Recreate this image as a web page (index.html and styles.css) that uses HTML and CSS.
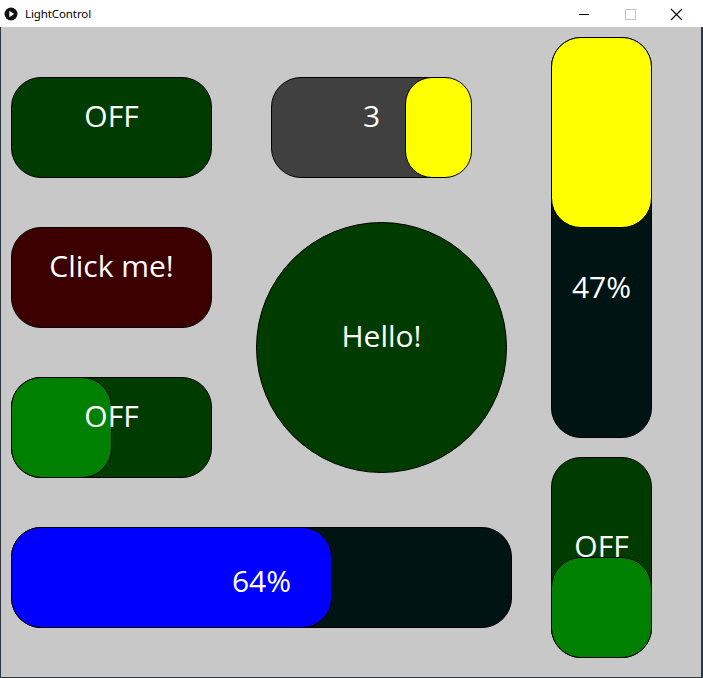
FILE: index.html
```html
<!DOCTYPE html>
<html>
<head>
<meta charset="utf-8">
<title>LightControl</title>
<link rel="stylesheet" href="styles.css">
</head>
<body>
<div class="window">
  <div class="titlebar">
    <svg class="app-icon" width="16" height="16" viewBox="0 0 16 16">
      <circle cx="8" cy="8" r="6.5" fill="#111"/>
      <polygon points="6.3,4.8 6.3,11.2 11.2,8" fill="#fff"/>
    </svg>
    <span class="title">LightControl</span>
    <div class="controls">
      <svg class="ctl" width="46" height="27" viewBox="0 0 46 27"><line x1="18" y1="14.5" x2="28" y2="14.5" stroke="#000" stroke-width="1"/></svg>
      <svg class="ctl" width="46" height="27" viewBox="0 0 46 27"><rect x="18.5" y="9.5" width="10" height="10" fill="none" stroke="#c4c4c4" stroke-width="1"/></svg>
      <svg class="ctl" width="46" height="27" viewBox="0 0 46 27"><path d="M18 9 L29 20 M29 9 L18 20" stroke="#000" stroke-width="1.1"/></svg>
    </div>
  </div>
  <div class="frame">
    <div class="canvas">
      <div class="left">
        <div class="row1">
          <div class="w dark-green"><span class="lbl">OFF</span></div>
          <div class="w gray"><span class="lbl">3</span><div class="handle"></div></div>
        </div>
        <div class="row2">
          <div class="stack">
            <div class="w dark-red"><span class="lbl">Click me!</span></div>
            <div class="w dark-green"><div class="knob knob-left"></div><span class="lbl">OFF</span></div>
          </div>
          <div class="circle"><span class="lbl">Hello!</span></div>
        </div>
        <div class="w hslider"><div class="fill-blue" style="width:321px"></div><span class="lbl lbl-low">64%</span></div>
      </div>
      <div class="right">
        <div class="w vslider"><div class="fill-yellow" style="height:191px"></div><span class="lbl lbl-vs">47%</span></div>
        <div class="w vtoggle dark-green"><span class="lbl">OFF</span><div class="knob knob-bottom"></div></div>
      </div>
    </div>
  </div>
</div>
</body>
</html>
```
FILE: styles.css
```css
* { box-sizing: border-box; }
html, body { margin: 0; padding: 0; }
body {
  width: 703px;
  height: 678px;
  overflow: hidden;
  background: #fff;
  font-family: "Open Sans", "DejaVu Sans", sans-serif;
}
.window { width: 703px; height: 678px; display: flex; flex-direction: column; }

.titlebar {
  height: 27px;
  display: flex;
  align-items: center;
  background: #fff;
  padding-left: 3px;
}
.app-icon { display: block; margin-top: 1px; }
.title {
  margin-left: 6px;
  font-family: "Noto Sans", "Open Sans", sans-serif;
  font-size: 11.5px;
  color: #000;
  letter-spacing: -0.1px;
}
.controls { margin-left: auto; display: flex; margin-right: 4px; }
.ctl { display: block; }

.frame {
  width: 703px;
  height: 651px;
  border-left: 1px solid #2c3740;
  border-right: 2px solid #2c3740;
  border-bottom: 1px solid #2c3740;
}
.canvas {
  width: 700px;
  height: 650px;
  background: #c8c8c8;
  display: flex;
  gap: 40px;
  padding: 10px 0 0 10px;
}

.left { display: flex; flex-direction: column; padding-top: 40px; width: 500px; }
.row1 { display: flex; gap: 59px; }
.row2 { display: flex; gap: 44px; margin-top: 44px; }
.stack { display: flex; flex-direction: column; gap: 49px; padding-top: 5px; }
.right { display: flex; flex-direction: column; gap: 20px; }

.w {
  position: relative;
  width: 201px;
  height: 101px;
  border: 1px solid #000;
  border-radius: 30px;
  display: flex;
  align-items: center;
  justify-content: center;
  color: #fff;
  font-size: 30px;
  line-height: 30px;
}
.lbl { position: relative; padding-bottom: 23px; white-space: nowrap; }
.lbl-low { padding-bottom: 0; padding-top: 7px; }
.lbl-vs { padding-bottom: 0; padding-top: 99px; }

.dark-green { background: #003c00; }
.dark-red { background: #3c0000; }
.gray { background: #404040; }

.handle {
  position: absolute;
  top: -1px;
  right: -1px;
  width: 67px;
  height: 101px;
  background: #ffff00;
  border: 1px solid #000;
  border-radius: 27px;
}

.knob {
  position: absolute;
  width: 101px;
  height: 101px;
  background: #008000;
  border: 1px solid #000;
  border-radius: 30px;
}
.knob-left { top: -1px; left: -1px; }
.knob-bottom { bottom: -1px; left: -1px; }

.circle {
  width: 251px;
  height: 251px;
  border-radius: 50%;
  border: 1px solid #000;
  background: #003c00;
  display: flex;
  align-items: center;
  justify-content: center;
  color: #fff;
  font-size: 30px;
  line-height: 30px;
}

.hslider { width: 501px; margin-top: 49px; background: #001414; }
.fill-blue {
  position: absolute;
  top: -1px;
  left: -1px;
  height: 101px;
  background: #0000ff;
  border: 1px solid #000;
  border-radius: 30px;
}

.vslider { width: 101px; height: 401px; background: #001414; }
.fill-yellow {
  position: absolute;
  top: -1px;
  left: -1px;
  width: 101px;
  background: #ffff00;
  border: 1px solid #000;
  border-radius: 30px;
}
.vtoggle { width: 101px; height: 201px; margin-top: -1px; }
```
